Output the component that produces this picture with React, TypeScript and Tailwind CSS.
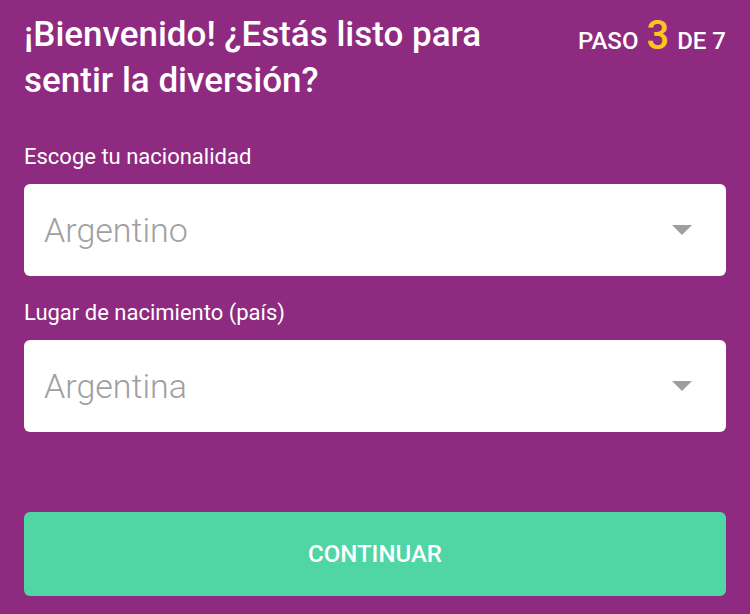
import React from "react";

function Caret() {
  return (
    <svg width="20" height="10" viewBox="0 0 20 10" className="shrink-0">
      <path d="M0 0 L20 0 L10 10 Z" fill="#9e9e9e" />
    </svg>
  );
}

function SelectBox({ label, value }: { label: string; value: string }) {
  return (
    <div className="flex flex-col">
      <label className="text-[22px] leading-[26px] text-white mb-[14px]">{label}</label>
      <div className="h-[92px] bg-white rounded-[6px] flex items-center justify-between pl-[20px] pr-[34px]">
        <span className="text-[34px] font-light text-[#a0a0a0]">{value}</span>
        <Caret />
      </div>
    </div>
  );
}

export default function App() {
  return (
    <div
      className="w-[750px] h-[614px] bg-[#8e2a80] px-[24px] pt-[12px] flex flex-col"
      style={{ fontFamily: "Roboto, 'Noto Sans', sans-serif" }}
    >
      <div className="flex justify-between items-start">
        <h1 className="text-[35px] leading-[46px] font-medium text-white w-[500px]">
          ¡Bienvenido! ¿Estás listo para sentir la diversión?
        </h1>
        <div className="flex items-baseline gap-[8px] text-white font-medium text-[24px] pt-[2px]">
          <span>PASO</span>
          <span className="text-[40px] text-[#ffc61a] leading-[44px]">3</span>
          <span>DE 7</span>
        </div>
      </div>

      <div className="mt-[40px] flex flex-col gap-[24px]">
        <SelectBox label="Escoge tu nacionalidad" value="Argentino" />
        <SelectBox label="Lugar de nacimiento (país)" value="Argentina" />
      </div>

      <button className="mt-[80px] h-[84px] w-full bg-[#50d6a4] rounded-[6px] text-white text-[24px] font-medium">
        CONTINUAR
      </button>
    </div>
  );
}
